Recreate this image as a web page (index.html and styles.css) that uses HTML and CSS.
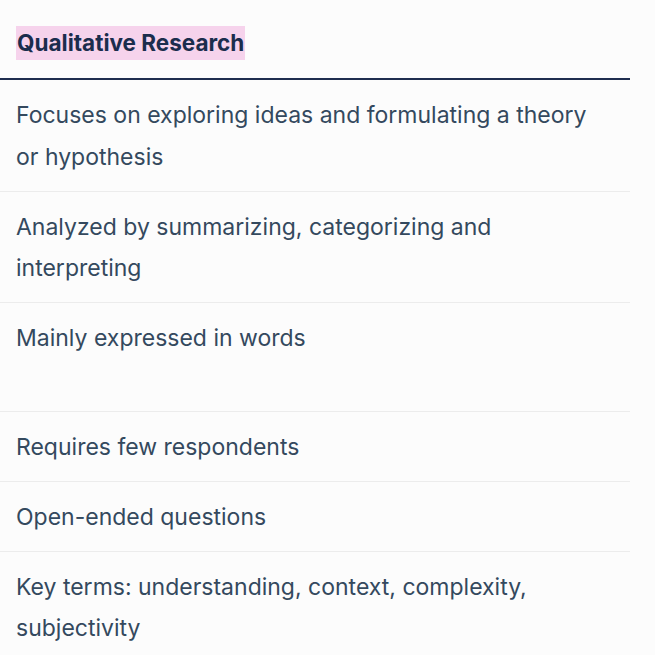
FILE: index.html
```html
<!DOCTYPE html>
<html>
<head>
<meta charset="utf-8">
<link rel="stylesheet" href="styles.css">
</head>
<body>
<table class="compare">
  <thead>
    <tr><th><span class="mark">Qualitative Research</span></th></tr>
  </thead>
  <tbody>
    <tr><td>Focuses on exploring ideas and formulating a theory or hypothesis</td></tr>
    <tr><td>Analyzed by summarizing, categorizing and interpreting</td></tr>
    <tr class="tall"><td>Mainly expressed in words</td></tr>
    <tr><td>Requires few respondents</td></tr>
    <tr><td>Open-ended questions</td></tr>
    <tr><td>Key terms: understanding, context, complexity, subjectivity</td></tr>
  </tbody>
</table>
</body>
</html>
```
FILE: styles.css
```css
html, body {
  margin: 0;
  padding: 0;
  background: #fcfcfc;
}
body {
  font-family: Inter, "Noto Sans", sans-serif;
  overflow: hidden;
}
.compare {
  width: 630px;
  border-collapse: collapse;
}
.compare th {
  text-align: left;
  padding: 26px 16px 18px;
  border-bottom: 2px solid #1f2d4f;
}
.mark {
  display: inline-block;
  background: #f6d3ec;
  color: #1b2d4d;
  font-weight: 700;
  font-size: 22.5px;
  line-height: 34px;
  padding: 0 1px;
}
.compare td {
  padding: 15px 30px 12.5px 16px;
  font-size: 23px;
  line-height: 41.5px;
  color: #34495e;
  border-bottom: 1px solid #ececec;
  vertical-align: top;
}
.compare tr.tall td {
  height: 80px;
}
```
